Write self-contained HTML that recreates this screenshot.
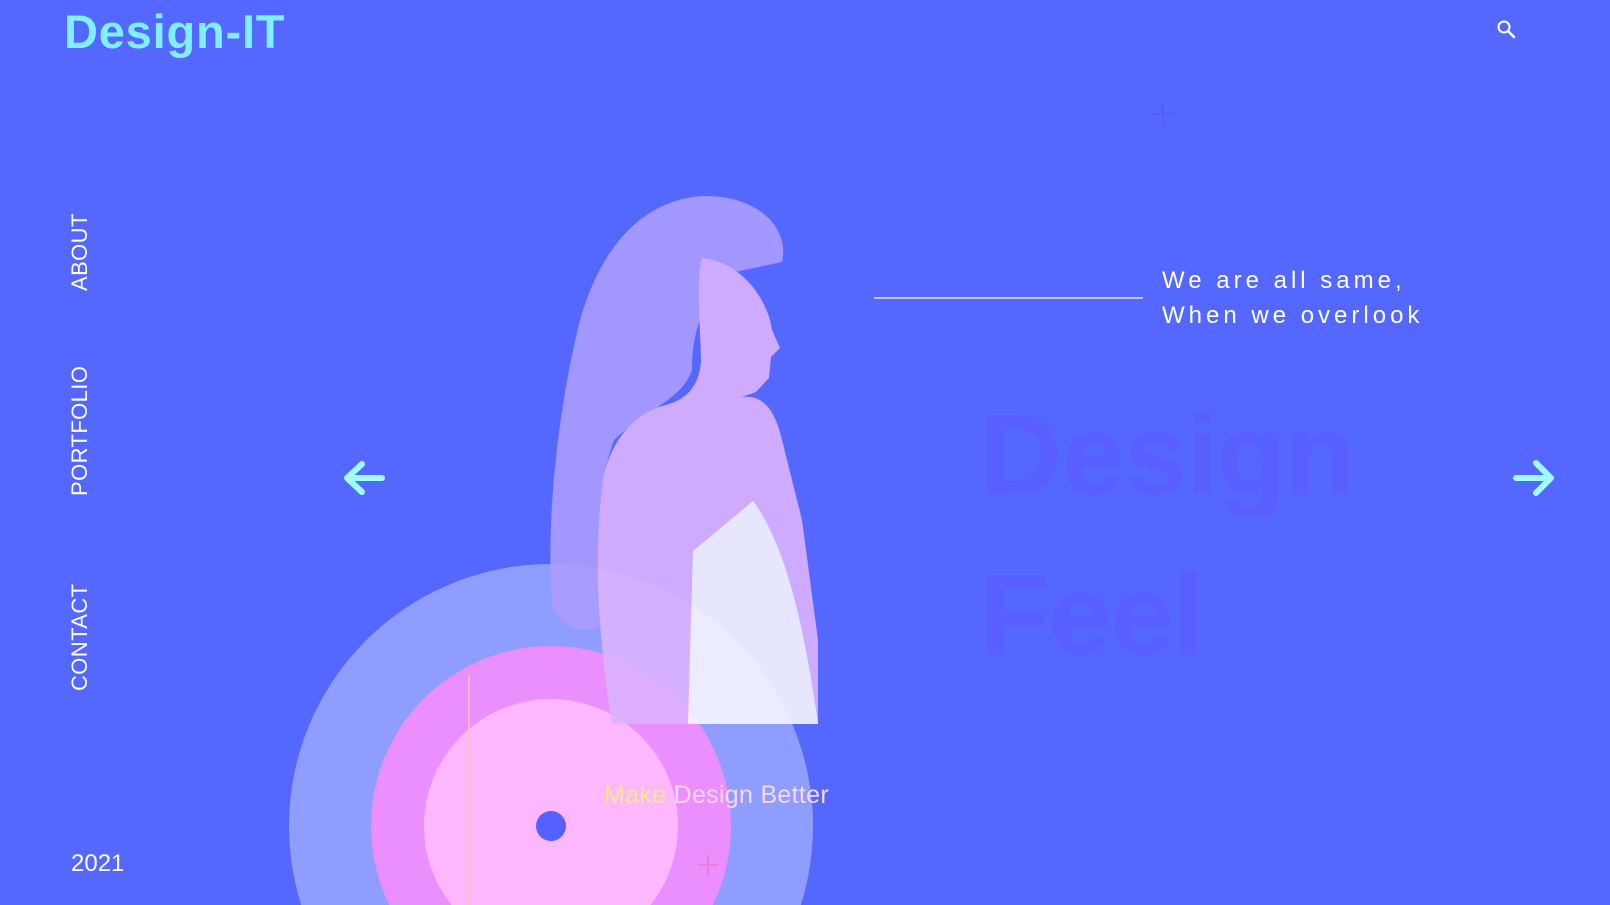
<!DOCTYPE html>
<html><head><meta charset="utf-8"><style>
*{margin:0;padding:0;box-sizing:border-box}
html{overflow:hidden}
body{width:1610px;height:905px;background:#5468ff;overflow:hidden;position:relative;font-family:"Liberation Sans",sans-serif}
.abs{position:absolute}
.logo{left:64px;top:4px;font-size:47px;font-weight:bold;color:#7ff0ff;letter-spacing:0.8px}
.nav{color:#fff;font-size:22px;letter-spacing:0.4px;transform:rotate(-90deg);transform-origin:left top;white-space:nowrap}
.tag{left:1162px;color:#fff;font-size:24px;letter-spacing:4px}
.big{left:980px;font-size:114px;font-weight:bold;color:#585eff;letter-spacing:-1px}
</style></head><body>
<div class="abs logo">Design-IT</div>
<svg class="abs" style="left:1496px;top:19px" width="22" height="22" viewBox="0 0 22 22"><circle cx="8" cy="8" r="5.5" stroke="#fff" stroke-width="2" fill="none"/><path d="M12 12 L18 18" stroke="#fff" stroke-width="2.5" stroke-linecap="round"/></svg>

<div class="abs nav" style="left:67px;top:291px">ABOUT</div>
<div class="abs nav" style="left:67px;top:496px">PORTFOLIO</div>
<div class="abs nav" style="left:67px;top:691px">CONTACT</div>
<div class="abs" style="left:71px;top:850px;color:#fff;font-size:24px">2021</div>

<svg class="abs" style="left:340px;top:455px" width="48" height="46" viewBox="0 0 48 46"><path d="M42 23 H8 M22 9 L7 23 L22 37" stroke="#9ffcff" stroke-width="6" fill="none" stroke-linecap="round" stroke-linejoin="round"/></svg>
<svg class="abs" style="left:1510px;top:455px" width="48" height="46" viewBox="0 0 48 46"><path d="M6 23 H40 M26 8 L41 23 L26 38" stroke="#9ffcff" stroke-width="6" fill="none" stroke-linecap="round" stroke-linejoin="round"/></svg>

<div class="abs" style="left:874px;top:297px;width:269px;height:2px;background:#c4c8ff"></div>
<div class="abs tag" style="top:267px">We are all same,</div>
<div class="abs tag" style="top:302px">When we overlook</div>

<div class="abs big" style="top:390px">Design</div>
<div class="abs big" style="top:550px">Feel</div>

<svg class="abs" style="left:0;top:0" width="1610" height="905">
<path d="M1163 104 V124 M1153 114 H1173" stroke="#5a5cf0" stroke-width="2"/>
<circle cx="551" cy="826" r="262" fill="#8f9dff"/>
<circle cx="551" cy="826" r="180" fill="#eb8ffe"/>
<circle cx="551" cy="826" r="127" fill="#fdb7fe"/>
<line x1="469" y1="675" x2="469" y2="905" stroke="#ffc1b0" stroke-width="1.5"/>
<circle cx="551" cy="826" r="15" fill="#5460ff"/>
<path d="M708 855 V875 M698 865 H718" stroke="#f07ad8" stroke-width="2"/>
<g opacity="0.9">
<path d="M703 196 C760 195 790 230 782 262 L735 272 C705 292 692 330 692 370 C682 400 645 410 614 440 C592 500 600 560 602 622 C590 640 562 625 553 609 C544 520 560 400 580 320 C600 250 640 200 703 196 Z" fill="#ab9dff"/>
<path d="M702 258 C742 262 768 300 772 330 L780 348 L771 357 L769 378 L756 392 L742 397 C760 395 772 405 780 432 L802 520 L818 640 L818 724 L612 724 C600 650 592 560 603 480 C612 432 642 412 662 406 C690 400 700 382 701 360 C700 320 696 280 702 258 Z" fill="#dcb3ff"/>
<path d="M693 551 L753 501 C782 540 802 610 818 724 L688 724 Z" fill="#f6f5ff"/>
</g>
</svg>
<div class="abs" style="left:604px;top:781px;font-size:25px;letter-spacing:0.3px;color:#f6d8ff"><span style="color:#ffe58f">Make</span> Design Better</div>
</body></html>
